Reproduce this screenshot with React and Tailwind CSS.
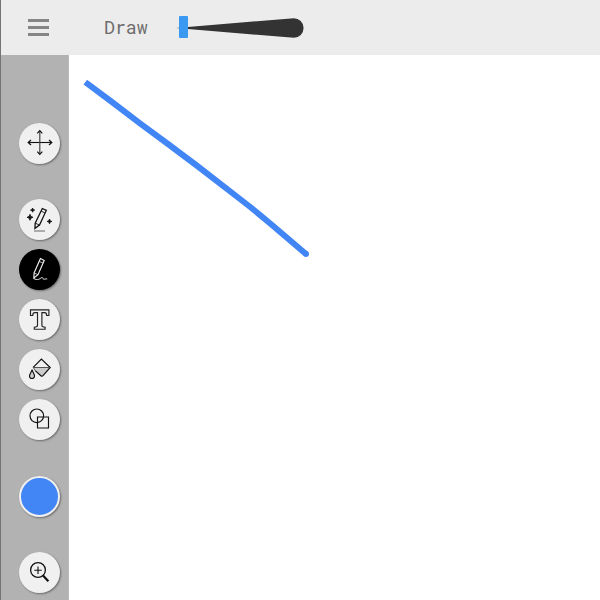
import React from "react";

function Tool({ children, className = "bg-[#f0f0f0] text-[#111]", label }) {
  return (
    <button
      aria-label={label}
      className={`block size-[41px] shrink-0 rounded-full shadow-[1px_1px_2px_rgba(0,0,0,0.4)] ${className}`}
    >
      {children}
    </button>
  );
}

function Icon({ children }) {
  return (
    <svg viewBox="0 0 41 41" className="block size-[41px]" fill="none" stroke="currentColor" strokeWidth="1.15">
      {children}
    </svg>
  );
}

export default function App() {
  return (
    <div className="flex h-[600px] w-[600px] flex-col overflow-hidden border-l border-[#747474] bg-white">
      <header className="flex h-[55px] shrink-0 items-center bg-[#ececec] pl-[27px]">
        <button aria-label="Menu" className="flex w-[21px] flex-col gap-1">
          <span className="h-[3px] bg-[#858585]" />
          <span className="h-[3px] bg-[#858585]" />
          <span className="h-[3px] bg-[#858585]" />
        </button>
        <span className="mb-[2px] ml-[55px] w-[44px] font-['Roboto_Mono','DejaVu_Sans_Mono',monospace] text-[18.2px] leading-6 text-[#6d6d6d]">
          Draw
        </span>
        <svg viewBox="0 0 132 24" className="ml-[26px] block h-6 w-[132px]">
          <path d="M2 12 119.8 2.2A9.8 9.8 0 0 1 119.8 21.8Z" fill="#333" />
          <rect x="5" y="0" width="9" height="22" rx="1" fill="#3b99f2" />
        </svg>
      </header>
      <div className="flex min-h-0 flex-1">
        <nav className="flex w-[68px] shrink-0 flex-col border-r border-[#bcbcbc] bg-[#b2b2b2] pt-[68px] pl-[18px]">
          <Tool label="Move">
            <Icon>
              <path d="M9.5 19.5h23" strokeWidth="1.1" />
              <path d="M20.8 8v23" stroke="#444" strokeWidth="1.2" />
              <path d="M12 17 9.2 19.5 12 22M30 17l2.8 2.5L30 22M18.3 10.3l2.5-2.6 2.5 2.6M18.3 28.7l2.5 2.6 2.5-2.6" strokeWidth="1.2" />
            </Icon>
          </Tool>
          <div className="mt-[35px] flex flex-col gap-[9px]">
            <Tool label="Magic draw">
              <Icon>
                <path d="M23.3 9.5 27.3 11.4 20.5 26.1 15.9 29.4 16.2 24.1Z" strokeWidth="1.3" />
                <path d="M22.1 12.1l4 1.9M16.2 24.1l4.3 2" strokeWidth="0.9" />
                <path d="M15 32h11" stroke="#777" />
                <path d="M11 15.3l.9 2.1 2.1.9-2.1.9-.9 2.1-.9-2.1-2.1-.9 2.1-.9ZM13.6 9l.6 1.5 1.5.6-1.5.6-.6 1.5-.6-1.5-1.5-.6 1.5-.6ZM30.5 20l.7 1.7 1.7.7-1.7.7-.7 1.7-.7-1.7-1.7-.7 1.7-.7Z" fill="currentColor" strokeWidth="0.8" />
              </Icon>
            </Tool>
            <Tool label="Draw" className="bg-black text-[#ededed]">
              <Icon>
                <path d="M21.4 9.5 25.2 11.4 19 25.7 14.8 29 15.1 24Z" strokeWidth="1.15" />
                <path d="M20.2 12.4l3.8 1.6M15.1 24l3.9 1.7" strokeWidth="0.8" />
                <path d="M15 29.6c1.5 1 3 1.1 4.7.7 1.6-.5 2.5-1.8 3.4-1.8 1 .2.5 1.3 1.6 1.7 1.3.4 2-.8 3.5-.2" strokeWidth="1" />
              </Icon>
            </Tool>
            <Tool label="Text">
              <Icon>
                <path d="M11.5 10.8h18.4v5.7h-2.2c0-2.1-.5-2.9-2.2-2.9h-2.6v13c0 1.2.8 1.5 3.2 1.6v2H15.3v-2c2.4-.1 3.2-.4 3.2-1.6v-13h-2.6c-1.7 0-2.2.8-2.2 2.9h-2.2Z" stroke="#222" />
              </Icon>
            </Tool>
            <Tool label="Fill">
              <Icon>
                <path d="M14.6 18.5h16.6L23 27l-5.3-4.5Z" fill="#ccc" stroke="none" />
                <path d="M14.2 18.3 22.4 10 31.2 18.5 24 26.6Q23 27.7 21.9 26.7L16.2 21.6" strokeWidth="1.2" />
                <path d="M14.2 18.5h16.8M14.2 18.3l2 3.3" stroke="#444" strokeWidth="0.9" />
                <path d="M13.1 20.6c-.4 2.4-2.6 4.3-2.6 6.4a2.5 2.5 0 0 0 5 0c0-2.1-2-4-2.4-6.4Z" fill="#ccc" />
              </Icon>
            </Tool>
            <Tool label="Shapes">
              <Icon>
                <circle cx="17.8" cy="16.8" r="6.8" />
                <path d="M18.5 18h11v11h-11Z" />
              </Icon>
            </Tool>
          </div>
          <div className="mt-9 flex flex-col gap-[35px]">
            <Tool label="Color" className="border-2 border-[#f0f0f0] bg-[#4286f5]" />
            <Tool label="Zoom">
              <Icon>
                <circle cx="19" cy="18" r="7.4" strokeWidth="1.3" />
                <path d="M15.3 18.3h7.4M19 14.6v7.4" strokeWidth="1.1" />
                <path d="M24 23.5l5.4 5.7" strokeWidth="2.2" />
              </Icon>
            </Tool>
          </div>
        </nav>
        <main className="min-w-0 flex-1 bg-white">
          <svg viewBox="69 55 531 545" className="block h-[545px] w-[531px]" fill="none" stroke="#4286f5" strokeWidth="6" strokeLinejoin="round">
            <path d="M85.3 82.2 L112 102 L140 123.3 L168 144 L198 166.5 L240 199 Q255 210.5 272 225 L306 254" />
            <circle cx="306" cy="254" r="3" fill="#4286f5" stroke="none" />
          </svg>
        </main>
      </div>
    </div>
  );
}
